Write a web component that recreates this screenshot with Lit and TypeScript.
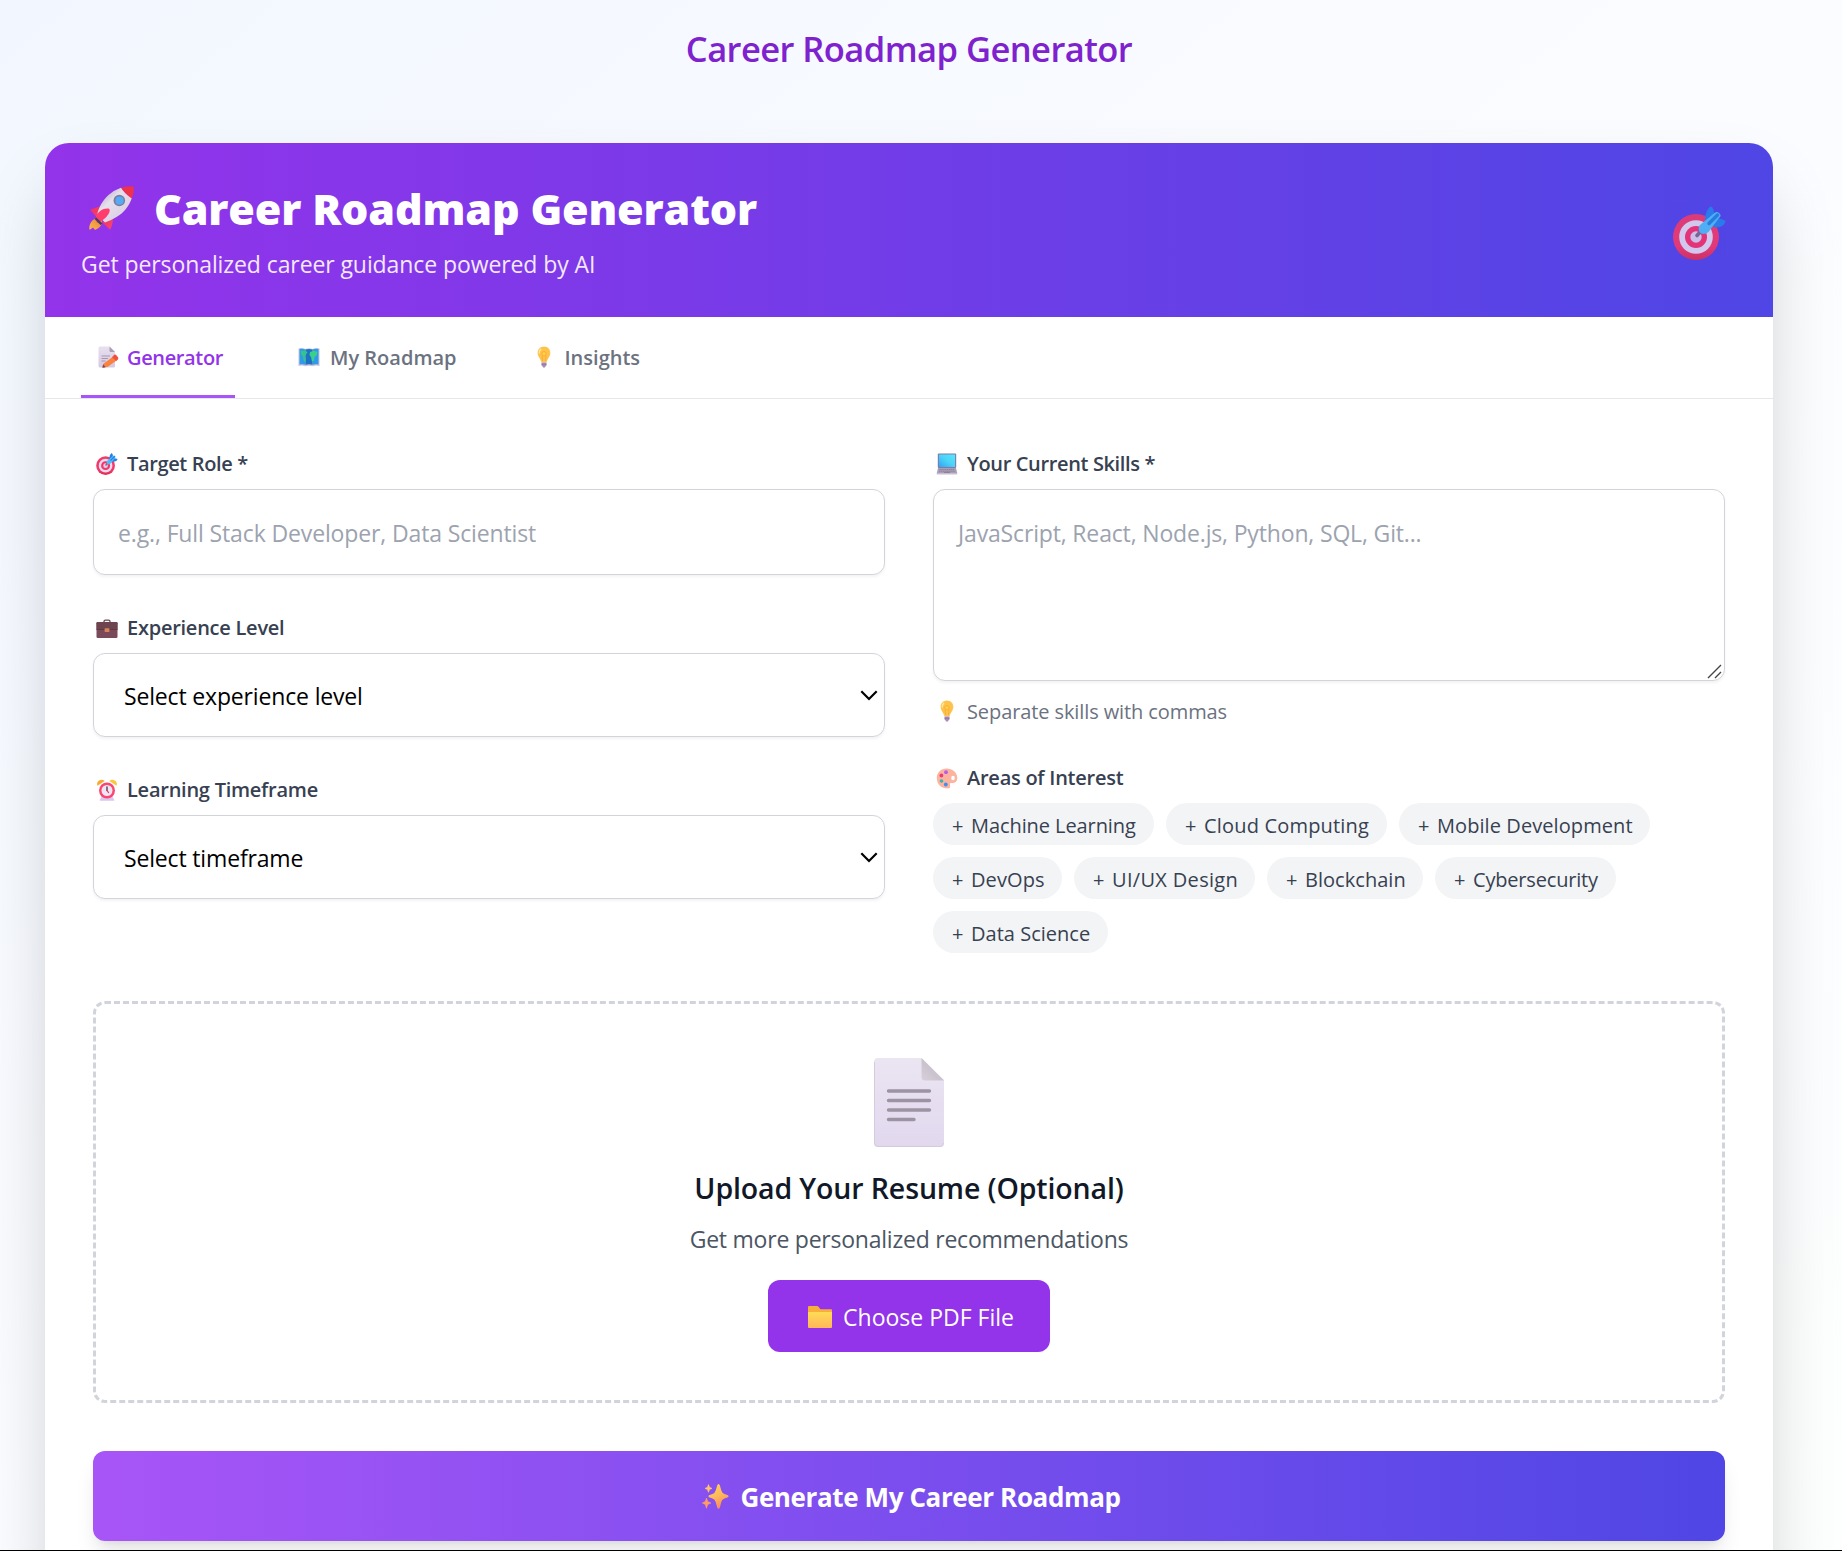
import { LitElement, html, css, TemplateResult } from "lit";
import { customElement, property, state } from "lit/decorators.js";
import { classMap } from "lit/directives/class-map.js";

const icons: Record<string, TemplateResult> = {
  rocket: html`<svg viewBox="0 0 45 44">
    <defs>
      <linearGradient id="rk-body" x1="0.15" y1="0.1" x2="0.85" y2="0.9"><stop offset="0" stop-color="#b9acc4"/><stop offset="0.35" stop-color="#e6dfec"/><stop offset="1" stop-color="#d9cbe3"/></linearGradient>
      <linearGradient id="rk-fin" x1="0" y1="0" x2="1" y2="1"><stop offset="0" stop-color="#e8305f"/><stop offset="1" stop-color="#ff4470"/></linearGradient>
      <linearGradient id="rk-fire" x1="0" y1="1" x2="1" y2="0"><stop offset="0" stop-color="#ffb84a"/><stop offset="1" stop-color="#e07f3c"/></linearGradient>
    </defs>
    <path d="M10 31 C5 32 0 36 .3 43 Q.5 44 2 43 L4 41.500 L5.600 43.400 Q6.500 44.200 7.800 43 C12 41 13.400 38 13 34 Z" fill="url(#rk-fire)"/>
    <path d="M14 20.500 Q8 20.500 1.500 23.500 Q.8 24.200 3 26 Q6 29 7.500 31 L14 25 Z" fill="url(#rk-fin)"/>
    <path d="M23 29 Q25.500 34 21.500 43 Q20.800 44 19.800 42.600 Q17 39 13 37 L18 31 Z" fill="url(#rk-fin)"/>
    <path d="M31 2 Q42 -.7 44.500 .8 Q45.600 4 42.600 13.500 Z" fill="#f0314c"/>
    <path d="M32 1.700 Q34.500 6.500 42.700 12.500 C40 20 35 27 27.500 31 Q21 35 16 36.500 L8.300 29 C9 22 14 14 19.500 9 Q25 4 32 1.700 Z" fill="url(#rk-body)"/>
    <path d="M8 37 L7 31 C9 25 14 22 19.500 22.500 Q22 23.400 19.500 28 Q16 34 8 37 Z" fill="#ff3d6d"/>
    <path d="M7.300 31.500 L13.500 37.500 L11.500 39 L5.500 33 Z" fill="#4b3b66"/>
    <circle cx="30.300" cy="14.500" r="5.800" fill="#7f7c99"/>
    <circle cx="30.500" cy="14.700" r="4.100" fill="#55aaf7"/>
  </svg>`,
  target: html`<svg viewBox="0 0 53 54">
    <defs><linearGradient id="tg-ring" x1="0" y1="0" x2="0" y2="1"><stop offset="0" stop-color="#f03b68"/><stop offset="0.7" stop-color="#f5386c"/><stop offset="1" stop-color="#df2e50"/></linearGradient></defs>
    <circle cx="23" cy="31" r="23" fill="url(#tg-ring)"/>
    <circle cx="23" cy="31" r="16.800" fill="#e4dbee"/>
    <circle cx="23" cy="31" r="11" fill="#f8316a"/>
    <circle cx="23" cy="31" r="5.700" fill="#dcd0e8"/>
    <path d="M24 29.500 L30 23" stroke="#7c6b8e" stroke-width="3.600" stroke-linecap="round"/>
    <path d="M32 12 Q33 4 37.500 .3 Q41 2 41 7 L40 15 L33 17 Z" fill="#2682ea"/>
    <path d="M42 12 Q49 12.500 52.800 15 Q51 21 43 21.500 L38 20 Z" fill="#2682ea"/>
    <path d="M27 19 L42 6.500 Q45 5 47 8 Q48.500 10 46 12 L35.500 26 Q30 30 26.500 26 Q24.500 22 27 19 Z" fill="#50bdf8"/>
    <path d="M36 17.500 L44.500 9" stroke="#1f86e0" stroke-width="3.400" stroke-linecap="round"/>
  </svg>`,
  memo: html`<svg viewBox="0 0 22 22">
    <defs><linearGradient id="mm" x1="0" y1="0" x2="0" y2="1"><stop offset="0" stop-color="#e8e0ef"/><stop offset="1" stop-color="#d6c8e2"/></linearGradient></defs>
    <path d="M2.500 .5 H12.500 L18 6 V20 Q18 21.500 16.500 21.500 H3 Q1.500 21.500 1.500 20 V2 Q1.500 .5 2.500 .5 Z" fill="url(#mm)"/>
    <path d="M12.500 .5 L18 6 H14 Q12.500 6 12.500 4.500 Z" fill="#aa9fb2"/>
    <path d="M4.500 10 H13 M4.500 12.500 H11 M4.500 15 H8.500" stroke="#a596b0" stroke-width="1.100"/>
    <path d="M15.500 11 L19.500 14.500 L10.500 21 L5.500 21.600 L6.200 18 Z" fill="#f9823f"/>
    <path d="M15 11.300 L17.200 8.700 Q18.300 8 20 9.900 L21.400 12 Q21.800 13.300 19.300 14.900 Z" fill="#f2503f"/>
    <path d="M6.200 18.500 L8.600 21.200 L5.300 21.700 Z" fill="#6b4a54"/>
  </svg>`,
  map: html`<svg viewBox="0 0 22 22">
    <path d="M.5 2.500 Q4 1.500 7.500 3 Q11 1.500 14.500 3 Q18 1.500 21.500 2.500 V20 Q18 19 14.500 20.300 Q11 19 7.500 20.300 Q4 19 .5 20 Z" fill="#c9c4dd"/>
    <path d="M1.500 3 Q5 2.500 7.500 3.600 V18.800 Q5 17.800 1.500 18.400 Z M14.500 3.600 Q17 2.500 20.500 3 V18.400 Q17 17.800 14.500 18.800 Z" fill="#2f9be8"/>
    <path d="M7.500 3.600 Q11 2.400 14.500 3.600 V18.800 Q11 17.600 7.500 18.800 Z" fill="#1c70c6"/>
    <path d="M3 5 L7.500 4.500 L9.500 6.500 L7.500 9 L6.500 11 L8 13 L7 16.500 L5.500 14 L5 10.500 L3 8 Z" fill="#34c48a"/>
    <path d="M12 6 L16 4.800 L19.500 6 L18.500 9.500 L16.500 11 L16 14.500 L14 15.500 L13 11 L11.500 9 Z" fill="#3ad08c"/>
  </svg>`,
  bulb: html`<svg viewBox="0 0 22 22">
    <defs><radialGradient id="bl" cx="0.5" cy="0.45" r="0.6"><stop offset="0" stop-color="#ffcf45"/><stop offset="0.65" stop-color="#ffc04b"/><stop offset="1" stop-color="#ffd866"/></radialGradient></defs>
    <path d="M11 .6 C7 .6 4.600 3.500 4.600 7 C4.600 10.500 7.300 12 8 15.500 Q8.200 16.600 9.300 16.600 H12.700 Q13.800 16.600 14 15.500 C14.700 12 17.400 10.500 17.400 7 C17.400 3.500 15 .6 11 .6 Z" fill="url(#bl)"/>
    <path d="M9.700 15.500 L9 9.500 M12.300 15.500 L13 9.500" stroke="#f3a83c" stroke-width=".8" fill="none"/>
    <circle cx="11" cy="7.800" r="2.300" fill="none" stroke="#f6a93a" stroke-width=".9"/>
    <path d="M7.800 3.200 Q6.200 4.600 6.300 7" stroke="#ffeaa0" stroke-width="1.200" fill="none" stroke-linecap="round"/>
    <path d="M8.500 16.500 H13.500 V19 Q13.500 20 12.700 20 L12 21.600 H10 L9.300 20 Q8.500 20 8.500 19 Z" fill="#a98bb5"/>
    <path d="M8.500 18.300 H13.500" stroke="#8d72a0" stroke-width=".7"/>
  </svg>`,
  briefcase: html`<svg viewBox="0 0 22 22">
    <path d="M8 6 V4.600 Q8 3.200 9.400 3.200 H12.600 Q14 3.200 14 4.600 V6" fill="none" stroke="#6b4650" stroke-width="1.300"/>
    <rect x=".5" y="5" width="21" height="16" rx="1.300" fill="#7b4a5a"/>
    <path d="M.5 6.300 Q.5 5 1.800 5 H20.200 Q21.500 5 21.500 6.300 V12.500 H.5 Z" fill="#6e444e"/>
    <path d="M.5 12.500 H21.500" stroke="#583340" stroke-width=".7"/>
    <rect x="8.600" y="11.300" width="4.800" height="3.600" rx=".6" fill="#d6845a"/>
  </svg>`,
  clock: html`<svg viewBox="0 0 22 22">
    <path d="M3.500 21.300 L6 17 H16 L18.500 21.300 Q18.300 21.700 17.500 21.700 H4.500 Q3.700 21.700 3.500 21.300 Z" fill="#dcc6ef"/>
    <path d="M1.500 6.800 Q.3 3.500 2.800 1.700 Q6 -.2 8.700 2.100 Z" fill="#f7a934"/>
    <path d="M20.500 6.800 Q21.700 3.500 19.200 1.700 Q16 -.2 13.300 2.100 Z" fill="#ffc53c"/>
    <circle cx="11" cy="11.500" r="8" fill="#fa4671"/>
    <circle cx="11" cy="11.500" r="5.500" fill="#eee5f5"/>
    <path d="M11 8 V11.500" stroke="#43344f" stroke-width="1.300" fill="none" stroke-linecap="round"/>
    <path d="M11 11.500 L12.600 13.600" stroke="#e8375f" stroke-width="1.200" stroke-linecap="round"/>
  </svg>`,
  laptop: html`<svg viewBox="0 0 22 22">
    <defs><linearGradient id="lp" x1="1" y1="0" x2="0" y2="1"><stop offset="0" stop-color="#58e8fb"/><stop offset="0.5" stop-color="#4bd3f8"/><stop offset="1" stop-color="#2ea4f3"/></linearGradient></defs>
    <rect x="1.800" y=".5" width="18.400" height="14.500" rx="1" fill="#8177a8"/>
    <rect x="2.900" y="1.500" width="16.200" height="12.500" fill="url(#lp)"/>
    <path d="M2 15 H20 L21.300 20.500 H.7 Z" fill="#a99fb8"/>
    <path d="M3.500 16.500 H18.500 M3 18.200 H19" stroke="#82788f" stroke-width=".8" stroke-dasharray="1.300 .6"/>
    <path d="M8 18.800 H14 V20.500 H8 Z" fill="#8d8299"/>
    <rect x=".7" y="20" width="20.600" height="1.400" rx=".6" fill="#c7bdd2"/>
  </svg>`,
  palette: html`<svg viewBox="0 0 22 22">
    <path d="M10.500 1.500 C16.500 1.500 21.300 5.500 21.300 11 C21.300 15 18.500 16.600 15.500 16 Q13.300 15.700 14 18 Q14.800 21.500 12 21.500 C5.500 21.500 .8 17.500 .8 11 C.8 5.500 5 1.500 10.500 1.500 Z" fill="#fcb4a0"/>
    <ellipse cx="17" cy="11" rx="1.800" ry="2.300" fill="#fff"/>
    <circle cx="10" cy="5.200" r="1.900" fill="#b65ae8"/>
    <circle cx="5.400" cy="8.500" r="1.900" fill="#f23b76"/>
    <circle cx="5.500" cy="14" r="1.800" fill="#35b8ac"/>
    <circle cx="9.800" cy="17.500" r="1.900" fill="#3f8df2"/>
  </svg>`,
  page: html`<svg viewBox="0 0 70 89">
    <defs>
      <linearGradient id="pg" x1="0" y1="0" x2="0" y2="1"><stop offset="0" stop-color="#ebe5f2"/><stop offset="1" stop-color="#e1d8ee"/></linearGradient>
      <linearGradient id="pf" x1="0" y1="1" x2="0.6" y2="0.4"><stop offset="0" stop-color="#d8d1dc"/><stop offset="1" stop-color="#c6bfc9"/></linearGradient>
    </defs>
    <path d="M4 0 H47.500 L70 22 V85 Q70 89 66 89 H4 Q0 89 0 85 V4 Q0 0 4 0 Z" fill="url(#pg)"/>
    <path d="M.5 4 V85 Q.5 88.500 4 88.500 H66 Q69.500 88.500 69.500 85" fill="none" stroke="#d5cbdd" stroke-width="1"/>
    <path d="M47.500 0 L70 22.500 H51 Q47.500 22.500 47.500 19 Z" fill="url(#pf)"/>
    <path d="M14.500 33 H55.500 M14.500 42.500 H55.500 M14.500 52 H55.500 M14.500 61.500 H40" stroke="#9c93a3" stroke-width="3.400" stroke-linecap="round"/>
  </svg>`,
  folder: html`<svg viewBox="0 0 24 22">
    <defs><linearGradient id="fd" x1="0" y1="0" x2="0" y2="1"><stop offset="0" stop-color="#ffdc55"/><stop offset="1" stop-color="#ffb65a"/></linearGradient></defs>
    <path d="M1 0 H9 Q10 0 10.700 1 L12.500 3.200 H23 Q24 3.200 24 4.200 V20 H0 V1 Q0 0 1 0 Z" fill="#f9ae3c"/>
    <path d="M0 6 H24 V21 Q24 22 23 22 H1 Q0 22 0 21 Z" fill="url(#fd)"/>
  </svg>`,
  sparkles: html`<svg viewBox="0 0 27 25">
    <defs><linearGradient id="sp" x1="0.2" y1="0" x2="0.6" y2="1"><stop offset="0" stop-color="#ffd453"/><stop offset="0.5" stop-color="#ffb95a"/><stop offset="1" stop-color="#fb8460"/></linearGradient></defs>
    <path d="M16.500 0 Q17.500 0 17.900 1.500 L19.300 6.500 Q20 9 22.500 9.900 L26 11.300 Q27.300 12.300 26 13.300 L22.500 14.600 Q20 15.500 19.300 18 L17.900 23.500 Q16.500 26 15.200 23.500 L13.700 18 Q13 15.500 10.500 14.600 L7 13.300 Q5.700 12.300 7 11.300 L10.500 9.900 Q13 9 13.700 6.500 L15.200 1.500 Q15.600 0 16.500 0 Z" fill="url(#sp)"/>
    <path d="M6.500 .5 L7.500 3.200 L10 4.400 L7.500 5.600 L6.500 8.300 L5.500 5.600 L3 4.400 L5.500 3.200 Z" fill="#ffc766" stroke="#ffc766" stroke-width=".6" stroke-linejoin="round"/>
    <path d="M4.500 14 L5.700 17.500 L9 19 L5.700 20.500 L4.500 24.300 L3.300 20.500 L.3 19 L3.300 17.500 Z" fill="#ff9d66" stroke="#ff9d66" stroke-width=".6" stroke-linejoin="round"/>
  </svg>`,
};

@customElement("emoji-icon")
export class EmojiIcon extends LitElement {
  static styles = css`
    :host { display: block; flex: none; width: 22px; height: 22px; }
    svg { display: block; width: 100%; height: 100%; overflow: visible; }
  `;
  @property() name = "";
  render() {
    return icons[this.name];
  }
}

interface Interest { label: string; track: number; width: number; }

@customElement("app-root")
export class AppRoot extends LitElement {
  static styles = css`
    :host {
      display: block;
      font-family: "Open Sans", "Noto Sans", sans-serif;
      font-size: 23px;
      color: #111827;
    }
    *, *::before, *::after { box-sizing: border-box; }
    h1, h2, h3, p { margin: 0; }
    input, textarea, select, button { font: inherit; color: inherit; margin: 0; }

    .screen { height: 1551px; display: flex; flex-direction: column; overflow: hidden; }
    .page {
      flex: 1;
      min-height: 0;
      overflow: hidden;
      padding: 24px 69px 0 45px;
      background: linear-gradient(to bottom right, #f2f7ff, #fbfcff 50%, #fcfffe);
    }
    .edge { flex: none; height: 1px; background: #000; }

    .page-title {
      height: 119px;
      line-height: 49px;
      text-align: center;
      font-size: 34.5px;
      font-weight: 600;
      letter-spacing: -0.55px;
      color: #7e22ce;
    }
    .card {
      height: 1560px;
      border-radius: 24px;
      overflow: hidden;
      background: #fff;
      box-shadow: 0 37.5px 75px -18px rgba(0, 0, 0, 0.25);
    }
    .banner {
      display: flex;
      justify-content: space-between;
      align-items: center;
      height: 174px;
      padding: 0 47px 0 36px;
      color: #fff;
      background: linear-gradient(to right, #9333ea, #4f46e5);
    }
    .banner h1 {
      display: flex;
      align-items: center;
      gap: 20px;
      padding-left: 8px;
      line-height: 59px;
      font-size: 43px;
      font-weight: 800;
      letter-spacing: -0.17px;
    }
    .rocket { width: 45px; height: 44px; }
    .banner p { margin-top: 9px; line-height: 35px; letter-spacing: -0.09px; color: #f3e8ff; }
    .big-target { width: 53px; height: 54px; opacity: 0.88; margin-top: 6px; }

    .tabs {
      display: flex;
      gap: 48px;
      height: 82px;
      padding: 0 36px;
      border-bottom: 1px solid #e5e7eb;
    }
    .tab {
      display: flex;
      align-items: center;
      gap: 10px;
      height: 81px;
      padding: 2px 13px 0 15px;
      border: 0;
      border-bottom: 3px solid transparent;
      background: none;
      font-size: 20px;
      font-weight: 600;
      letter-spacing: 0;
      color: #6b7280;
    }
    .tab.active { gap: 8px; padding-left: 16px; padding-right: 12px; color: #9333ea; border-color: #a855f7; letter-spacing: -0.36px; }

    .form { padding: 48px; }
    .columns { display: grid; grid-template-columns: 1fr 1fr; gap: 48px; height: 506px; }
    .label {
      display: flex;
      align-items: center;
      gap: 9px;
      height: 32px;
      margin-bottom: 10px;
      padding: 2px 0 0 3px;
      line-height: 30px;
      font-size: 20px;
      font-weight: 600;
      letter-spacing: -0.25px;
      color: #374151;
    }
    .label.tight { letter-spacing: -0.36px; }
    .field { margin-bottom: 36px; }
    .box {
      display: block;
      width: 100%;
      border: 1px solid #d1d5db;
      border-radius: 12px;
      background: #fff;
      box-shadow: 0 1.500px 3px rgba(0, 0, 0, 0.05);
      outline: none;
    }
    .box::placeholder { color: #9ca3af; opacity: 1; }
    .input { height: 86px; padding: 2px 24px 0; letter-spacing: -0.13px; }
    .stack { display: grid; }
    .stack > * { grid-area: 1 / 1; }
    .select { height: 84px; padding: 1px 30px 0; appearance: none; letter-spacing: -0.16px; color: #000; }
    .chevron { place-self: center end; width: 18px; height: 11px; margin: 0 7px 0 0; pointer-events: none; }
    .textarea { height: 192px; padding: 27px 24px; line-height: 33px; resize: none; letter-spacing: -0.16px; }
    .grip { place-self: end; width: 15px; height: 15px; margin: 0 3px 2px 0; pointer-events: none; }
    .hint {
      display: flex;
      align-items: center;
      gap: 9px;
      height: 30px;
      margin: 15px 0 35px;
      padding-left: 3px;
      font-size: 20px;
      letter-spacing: -0.1px;
      color: #6b7280;
    }
    .chips { display: flex; flex-wrap: wrap; gap: 12px; }
    .chip {
      display: flex;
      align-items: center;
      height: 42px;
      padding: 2px 0 0 19px;
      border: 0;
      border-radius: 21px;
      background: #f3f4f6;
      font-size: 20px;
      white-space: nowrap;
      color: #374151;
    }
    .plus { width: 19px; text-align: left; }

    .upload {
      display: flex;
      flex-direction: column;
      align-items: center;
      height: 402px;
      margin: 48px 0;
      padding-top: 54px;
      border: 3px dashed #d1d5db;
      border-radius: 12px;
    }
    .page-icon { width: 70px; height: 89px; }
    .upload h3 { margin-top: 23px; line-height: 36px; font-size: 28.5px; font-weight: 600; letter-spacing: -0.13px; }
    .upload p { margin-top: 15px; line-height: 36px; letter-spacing: -0.23px; color: #4b5563; }
    .choose {
      display: flex;
      align-items: center;
      justify-content: center;
      gap: 11px;
      width: 282px;
      height: 72px;
      margin-top: 23px;
      padding: 2px 0 0 4px;
      border: 0;
      border-radius: 12px;
      background: #9333ea;
      color: #fff;
    }
    .folder { width: 24px; }
    .generate {
      display: flex;
      align-items: center;
      justify-content: center;
      gap: 11px;
      width: 100%;
      height: 90px;
      padding: 1px 0 0 5px;
      border: 0;
      border-radius: 12px;
      background: linear-gradient(to right, #a855f7, #4f46e5);
      box-shadow: 0 15px 22.5px -4.500px rgba(0, 0, 0, 0.1), 0 6px 9px -6px rgba(0, 0, 0, 0.1);
      color: #fff;
      font-size: 26px;
      font-weight: 700;
      letter-spacing: -0.385px;
    }
    .sparkles { width: 27px; height: 25px; }
  `;

  @state() private tab = "Generator";

  private tabs = [
    { icon: "memo", label: "Generator" },
    { icon: "map", label: "My Roadmap" },
    { icon: "bulb", label: "Insights" },
  ];

  private interests: Interest[] = [
    { label: "Machine Learning", track: -0.08, width: 221 },
    { label: "Cloud Computing", track: 0.18, width: 221 },
    { label: "Mobile Development", track: 0.08, width: 251 },
    { label: "DevOps", track: 0.09, width: 129 },
    { label: "UI/UX Design", track: 0.32, width: 181 },
    { label: "Blockchain", track: 0.04, width: 156 },
    { label: "Cybersecurity", track: -0.18, width: 181 },
    { label: "Data Science", track: 0.02, width: 175 },
  ];

  private label(icon: string, text: string, tight = false) {
    return html`<label class=${classMap({ label: true, tight })}><emoji-icon name=${icon}></emoji-icon><span>${text}</span></label>`;
  }

  private select(icon: string, label: string, placeholder: string) {
    return html`<div class="field">
      ${this.label(icon, label)}
      <div class="stack">
        <select class="box select"><option>${placeholder}</option></select>
        <svg class="chevron" viewBox="0 0 18 11"><path d="M1.300 1.300 L9 9 L16.700 1.300" fill="none" stroke="#000" stroke-width="2.200"/></svg>
      </div>
    </div>`;
  }

  render() {
    return html`<div class="screen">
      <main class="page">
        <h2 class="page-title">Career Roadmap Generator</h2>
        <section class="card">
          <header class="banner">
            <div>
              <h1><emoji-icon class="rocket" name="rocket"></emoji-icon><span>Career Roadmap Generator</span></h1>
              <p>Get personalized career guidance powered by AI</p>
            </div>
            <emoji-icon class="big-target" name="target"></emoji-icon>
          </header>
          <nav class="tabs">
            ${this.tabs.map(
              (t) => html`<button class=${classMap({ tab: true, active: t.label === this.tab })} @click=${() => (this.tab = t.label)}>
                <emoji-icon name=${t.icon}></emoji-icon><span>${t.label}</span>
              </button>`
            )}
          </nav>
          <div class="form">
            <div class="columns">
              <div>
                <div class="field">
                  ${this.label("target", "Target Role *", true)}
                  <input class="box input" placeholder="e.g., Full Stack Developer, Data Scientist" />
                </div>
                ${this.select("briefcase", "Experience Level", "Select experience level")}
                ${this.select("clock", "Learning Timeframe", "Select timeframe")}
              </div>
              <div>
                ${this.label("laptop", "Your Current Skills *", true)}
                <div class="stack">
                  <textarea class="box textarea" placeholder="JavaScript, React, Node.js, Python, SQL, Git..."></textarea>
                  <svg class="grip" viewBox="0 0 15 15"><path d="M1 14 L14 1 M8 14 L14 8" stroke="#444" stroke-width="1.400"/></svg>
                </div>
                <p class="hint"><emoji-icon name="bulb"></emoji-icon><span>Separate skills with commas</span></p>
                ${this.label("palette", "Areas of Interest")}
                <div class="chips">
                  ${this.interests.map(
                    (i) => html`<button class="chip" style="width:${i.width}px;letter-spacing:${i.track}px"><span class="plus">+</span><span>${i.label}</span></button>`
                  )}
                </div>
              </div>
            </div>
            <div class="upload">
              <emoji-icon class="page-icon" name="page"></emoji-icon>
              <h3>Upload Your Resume (Optional)</h3>
              <p>Get more personalized recommendations</p>
              <button class="choose"><emoji-icon class="folder" name="folder"></emoji-icon><span>Choose PDF File</span></button>
            </div>
            <button class="generate"><emoji-icon class="sparkles" name="sparkles"></emoji-icon><span>Generate My Career Roadmap</span></button>
          </div>
        </section>
      </main>
      <div class="edge"></div>
    </div>`;
  }
}
